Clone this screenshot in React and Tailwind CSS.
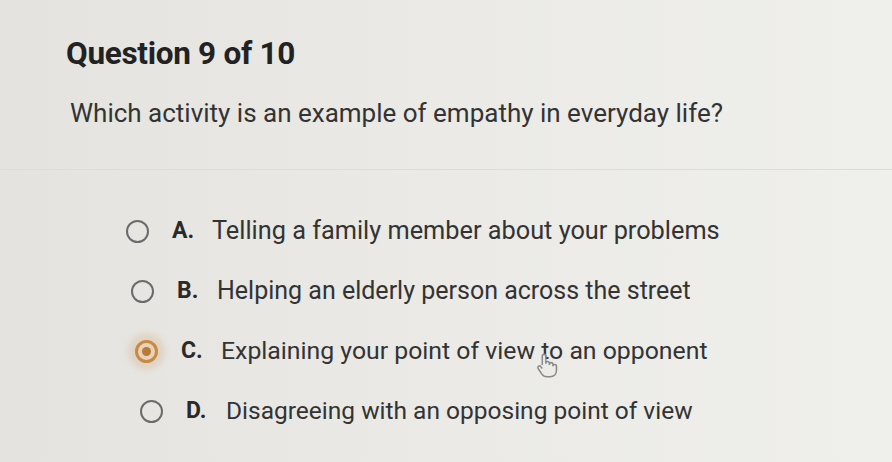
import React from "react";

const options = [
  { l: "A.", t: "Telling a family member about your problems", ml: "ml-[126px]", fs: "text-[25.3px]", sel: false },
  { l: "B.", t: "Helping an elderly person across the street", ml: "ml-[131px]", fs: "text-[25px]", sel: false },
  { l: "C.", t: "Explaining your point of view to an opponent", ml: "ml-[135px]", fs: "text-[24.8px]", sel: true },
  { l: "D.", t: "Disagreeing with an opposing point of view", ml: "ml-[140px]", fs: "text-[24.5px]", sel: false },
];

function Radio({ sel }) {
  if (sel) {
    return (
      <div className="relative w-[23px] h-[23px] shrink-0">
        <div className="absolute -inset-[7px] rounded-full bg-[#dcc7b0] opacity-60 blur-[3px]"></div>
        <div className="relative w-[23px] h-[23px] rounded-full border-[3px] border-[#c98a44] flex items-center justify-center bg-[#e9d3b8]">
          <div className="w-[9px] h-[9px] rounded-full bg-[#b87a38]"></div>
        </div>
      </div>
    );
  }
  return <div className="w-[23px] h-[23px] shrink-0 rounded-full border-2 border-[#6b6b6b]"></div>;
}

export default function App() {
  return (
    <div
      className="w-[892px] h-[462px] overflow-hidden relative bg-gradient-to-r from-[#e4e3df] via-[#ebeae6] to-[#efefeb] text-[#2e2e2e]"
      style={{ fontFamily: "Roboto, 'Liberation Sans', sans-serif" }}
    >
      <div className="pt-[36px] pl-[66px]">
        <h1 className="text-[31.5px] font-bold leading-[36px] tracking-[-0.3px] text-[#222]">Question 9 of 10</h1>
        <p className="mt-[25px] ml-[4px] text-[26px] leading-[32px] text-[#333]">
          Which activity is an example of empathy in everyday life?
        </p>
      </div>
      <div className="mt-[40px] h-px bg-[#dddcd8]"></div>
      <div className="mt-[47px] flex flex-col gap-[32px]">
        {options.map((o) => (
          <div key={o.l} className={`${o.ml} flex items-center h-[28px]`}>
            <Radio sel={o.sel} />
            <span className="ml-[23px] w-[40px] text-[23px] font-bold text-[#2a2a2a]">{o.l}</span>
            <span className={`${o.fs} text-[#333]`}>{o.t}</span>
          </div>
        ))}
      </div>
      <svg
        className="absolute left-[535px] top-[352px]"
        width="24"
        height="26"
        viewBox="0 0 20 22"
        fill="#ecebe7"
        stroke="#8a8a8a"
        strokeWidth="1.3"
        strokeLinejoin="round"
      >
        <path d="M6 11V3.5a1.5 1.5 0 0 1 3 0V10M9 9.5a1.5 1.5 0 0 1 3 0V11M12 10.5a1.5 1.5 0 0 1 3 0V12M15 12a1.5 1.5 0 0 1 3 0v3.5c0 3-2 5.5-5.5 5.5H10c-2 0-3.3-.8-4.5-2.5L2.5 14a1.4 1.4 0 0 1 2.3-1.6L6 14" />
      </svg>
    </div>
  );
}
